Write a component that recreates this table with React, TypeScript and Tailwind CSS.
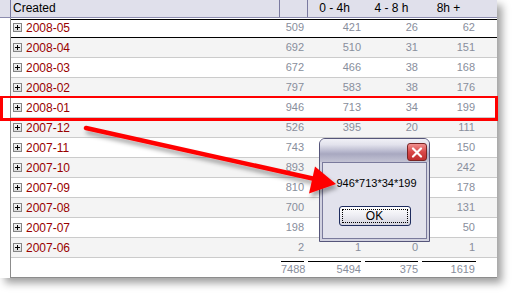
import React from "react";

type Row = [string, number, number | null, number | null, number];

// Values in the 0-4h and 4-8h columns for 2007-11 .. 2007-07 are hidden by the message box.
const rows: Row[] = [
  ["2008-05", 509, 421, 26, 62],
  ["2008-04", 692, 510, 31, 151],
  ["2008-03", 672, 466, 38, 168],
  ["2008-02", 797, 583, 38, 176],
  ["2008-01", 946, 713, 34, 199],
  ["2007-12", 526, 395, 20, 111],
  ["2007-11", 743, null, null, 150],
  ["2007-10", 893, null, null, 242],
  ["2007-09", 810, null, null, 178],
  ["2007-08", 700, null, null, 131],
  ["2007-07", 198, null, null, 50],
  ["2007-06", 2, 1, 0, 1],
];

function PlusBox() {
  return (
    <div className="w-[9px] h-[9px] border border-[#848484] bg-[linear-gradient(to_bottom,#f4f4f4,#dcdcdc)] flex items-center justify-center shrink-0">
      <svg width="7" height="7" viewBox="0 0 7 7">
        <rect x="1" y="3" width="5" height="1" fill="#000" />
        <rect x="3" y="1" width="1" height="5" fill="#000" />
      </svg>
    </div>
  );
}

export default function App() {
  return (
    <div className="relative w-[514px] h-[295px] bg-white overflow-hidden font-['Liberation_Sans',Arial,sans-serif]">
      <div className="w-[497px] h-[278px] flex flex-col bg-white shadow-[5px_5px_8px_rgba(0,0,0,0.38)]">
        {/* header */}
        <div className="h-[18px] flex bg-[#e0e0eb] border-b border-[#8c8cae] text-[12px] leading-[17px] text-black">
          <div className="w-[11px] border-r border-[#7a7aa0]" />
          <div className="w-[269px] border-r border-[#7a7aa0] pl-[2px]">Created</div>
          <div className="w-[28px] border-r border-[#7a7aa0]" />
          <div className="w-[57px] text-center pr-[4px]">0 - 4h</div>
          <div className="w-[57px] text-center pr-[4px]">4 - 8 h</div>
          <div className="w-[57px] text-center pr-[4px]">8h +</div>
        </div>
        {/* body */}
        <div className="flex flex-1">
          <div className="w-[11px] border-r border-[#8c8c8c] bg-white" />
          <div className="flex-1 flex flex-col">
            {rows.map((r, i) => (
              <div
                key={r[0]}
                className={
                  "h-[20px] flex items-center border-b " +
                  (i === 0
                    ? "border-black bg-white shadow-[inset_0_1px_0_#ffffff,inset_0_2px_0_#000000]"
                    : i % 2 === 1
                    ? "border-[#cbcbcb] bg-[#f4f4f4]"
                    : "border-[#cbcbcb] bg-white")
                }
              >
                <div className="w-[269px] flex items-center gap-[4px] pl-[2px] text-[12px] text-[#990000]">
                  <PlusBox />
                  <span className="leading-[14px]">{r[0]}</span>
                </div>
                <div className="w-[28px] text-right pr-[4px] text-[11px] text-[#888e9c]">{r[1]}</div>
                <div className="w-[57px] text-right pr-[4px] text-[11px] text-[#888e9c]">{r[2] ?? ""}</div>
                <div className="w-[57px] text-right pr-[4px] text-[11px] text-[#888e9c]">{r[3] ?? ""}</div>
                <div className="w-[57px] text-right pr-[4px] text-[11px] text-[#888e9c]">{r[4]}</div>
              </div>
            ))}
            {/* totals */}
            <div className="h-[20px] flex border-b border-[#8c8c8c] bg-white text-[11px] text-[#888e9c]">
              <div className="w-[269px]" />
              <div className="w-[28px] pl-[1px] pr-[4px] pt-[3px]">
                <div className="border-t border-black text-right leading-[14px]">7488</div>
              </div>
              <div className="w-[57px] pr-[4px] pt-[3px]">
                <div className="border-t border-black text-right leading-[14px]">5494</div>
              </div>
              <div className="w-[57px] pr-[4px] pt-[3px]">
                <div className="border-t border-black text-right leading-[14px]">375</div>
              </div>
              <div className="w-[57px] pr-[3px] pt-[3px]">
                <div className="border-t border-black text-right leading-[14px] pr-[1px]">1619</div>
              </div>
            </div>
          </div>
        </div>
      </div>

      {/* red highlight rectangle */}
      <div className="absolute left-0 top-[96px] w-[498px] h-[25px] border-[3px] border-t-[2px] border-[#ff0000]" />

      {/* message box */}
      <div className="absolute left-[319px] top-[138px] w-[111px] h-[104px] rounded-t-[6px] border border-[#55557a] bg-[#d2d2e0] flex flex-col overflow-hidden">
        <div className="h-[23px] flex justify-end items-start pt-[4px] pr-[2px] bg-[linear-gradient(to_bottom,#f0f0f6_0%,#e2e2ec_25%,#b6b6cc_55%,#a8a8c0_65%,#c4c4d4_100%)]">
          <div className="w-[20px] h-[18px] rounded-[3px] border border-[#7a2424] bg-[linear-gradient(to_bottom,#f09090,#d84848_50%,#c03030)] flex items-center justify-center">
            <svg width="12" height="11" viewBox="0 0 12 11">
              <path d="M2 1.5 L10 9.5 M10 1.5 L2 9.5" stroke="#ffffff" strokeWidth="2.2" strokeLinecap="round" />
            </svg>
          </div>
        </div>
        <div className="flex-1 mx-[2px] mb-[2px] border border-[#7a7a9c] bg-[#e2e2ec] flex flex-col items-center">
          <div className="mt-[13px] pl-[4px] text-[11px] leading-[14px] text-black">946*713*34*199</div>
          <div className="mt-[16px] w-[72px] h-[20px] rounded-[3px] border border-[#1e2c5e] bg-[linear-gradient(to_bottom,#ffffff,#ececf2_50%,#d4d4de)] p-[2px]">
            <div className="w-full h-full border border-dotted border-black flex items-center justify-center text-[12px] text-black leading-none">
              OK
            </div>
          </div>
        </div>
      </div>

      {/* arrow */}
      <svg className="absolute left-0 top-0 pointer-events-none" width="514" height="295">
        <defs>
          <filter id="ash" x="-10%" y="-20%" width="130%" height="160%">
            <feDropShadow dx="2" dy="4" stdDeviation="2" floodColor="#000000" floodOpacity="0.35" />
          </filter>
        </defs>
        <g filter="url(#ash)">
          <line x1="86" y1="128" x2="316" y2="179.2" stroke="#ff0000" strokeWidth="4.5" strokeLinecap="round" />
          <polygon points="336,184 309,193.5 315,166.5" fill="#ff0000" />
        </g>
      </svg>
    </div>
  );
}
